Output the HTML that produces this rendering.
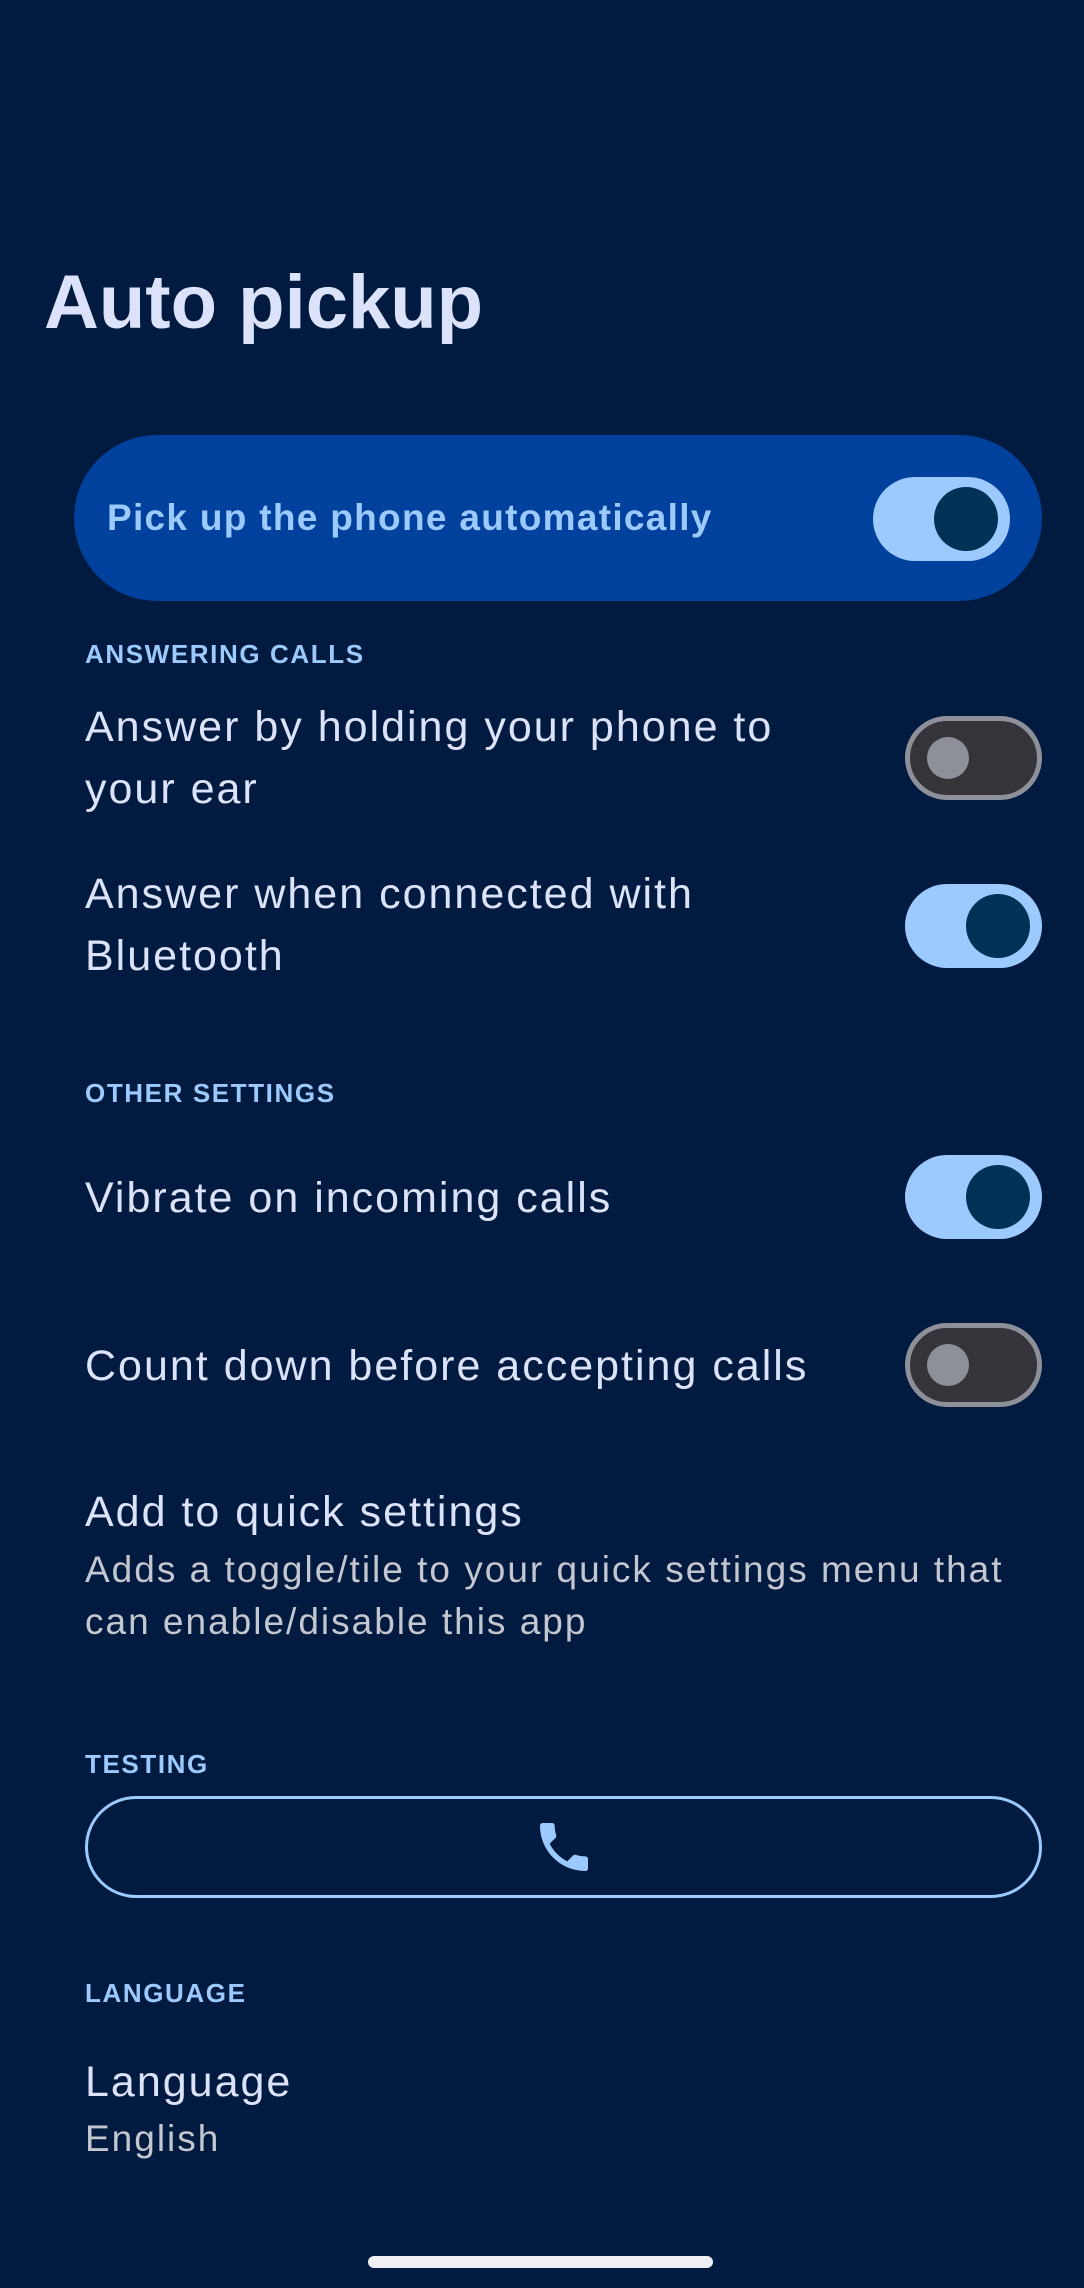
<!DOCTYPE html>
<html><head><meta charset="utf-8"><style>
*{margin:0;padding:0;box-sizing:border-box}
body{width:1084px;height:2288px;background:#001b3f;font-family:"Liberation Sans",sans-serif;position:relative;overflow:hidden;color:#dbe2f9}
.a{position:absolute;white-space:nowrap}
.h{color:#9ccaff;font-weight:bold;font-size:26px;letter-spacing:1.6px;line-height:30px;left:85px}
.t{font-size:43px;letter-spacing:2px;line-height:62px;left:85px}
.s{font-size:37px;letter-spacing:2px;line-height:52px;left:85px;color:#c4c6d0}
.sw{position:absolute;width:137px;height:84px;border-radius:42px}
.on{background:#9ccaff}
.on::after{content:"";position:absolute;right:12px;top:10px;width:64px;height:64px;border-radius:50%;background:#003258}
.off{background:#36343b;border:5px solid #8e9099}
.off::after{content:"";position:absolute;left:17px;top:16px;width:42px;height:42px;border-radius:50%;background:#8e9099}
</style></head><body>
<div class="a" style="left:44px;top:258px;font-size:76px;font-weight:bold;line-height:90px;color:#dbe2f9">Auto pickup</div>
<div class="a" style="left:74px;top:435px;width:968px;height:166px;border-radius:83px;background:#00419e"></div>
<div class="a" style="left:107px;top:497px;font-size:37px;letter-spacing:1.3px;font-weight:bold;line-height:42px;color:#9ccaff">Pick up the phone automatically</div>
<div class="sw on" style="left:873px;top:477px"></div>
<div class="a h" style="top:639px">ANSWERING CALLS</div>
<div class="a t" style="top:696px">Answer by holding your phone to<br>your ear</div>
<div class="sw off" style="left:905px;top:716px"></div>
<div class="a t" style="top:863px">Answer when connected with<br>Bluetooth</div>
<div class="sw on" style="left:905px;top:884px"></div>
<div class="a h" style="top:1078px">OTHER SETTINGS</div>
<div class="a t" style="top:1167px">Vibrate on incoming calls</div>
<div class="sw on" style="left:905px;top:1155px"></div>
<div class="a t" style="top:1335px">Count down before accepting calls</div>
<div class="sw off" style="left:905px;top:1323px"></div>
<div class="a t" style="top:1481px">Add to quick settings</div>
<div class="a s" style="top:1544px">Adds a toggle/tile to your quick settings menu that<br>can enable/disable this app</div>
<div class="a h" style="top:1749px">TESTING</div>
<div class="a" style="left:85px;top:1796px;width:957px;height:102px;border:3px solid #9ccaff;border-radius:51px"></div>
<svg class="a" style="left:532px;top:1815px" width="64" height="64" viewBox="0 0 24 24"><path fill="#9ccaff" d="M6.62 10.790c1.44 2.830 3.760 5.140 6.590 6.590l2.200-2.200c.27-.27.67-.36 1.020-.24 1.120.37 2.330.57 3.570.57.55 0 1 .45 1 1V20c0 .55-.45 1-1 1-9.390 0-17-7.610-17-17 0-.55.45-1 1-1h3.500c.55 0 1 .45 1 1 0 1.250.2 2.450.57 3.570.11.35.03.74-.25 1.020l-2.200 2.200z"/></svg>
<div class="a h" style="top:1978px">LANGUAGE</div>
<div class="a t" style="top:2051px">Language</div>
<div class="a s" style="top:2113px">English</div>
<div class="a" style="left:368px;top:2256px;width:345px;height:12px;border-radius:6px;background:#eef0f4"></div>
</body></html>
